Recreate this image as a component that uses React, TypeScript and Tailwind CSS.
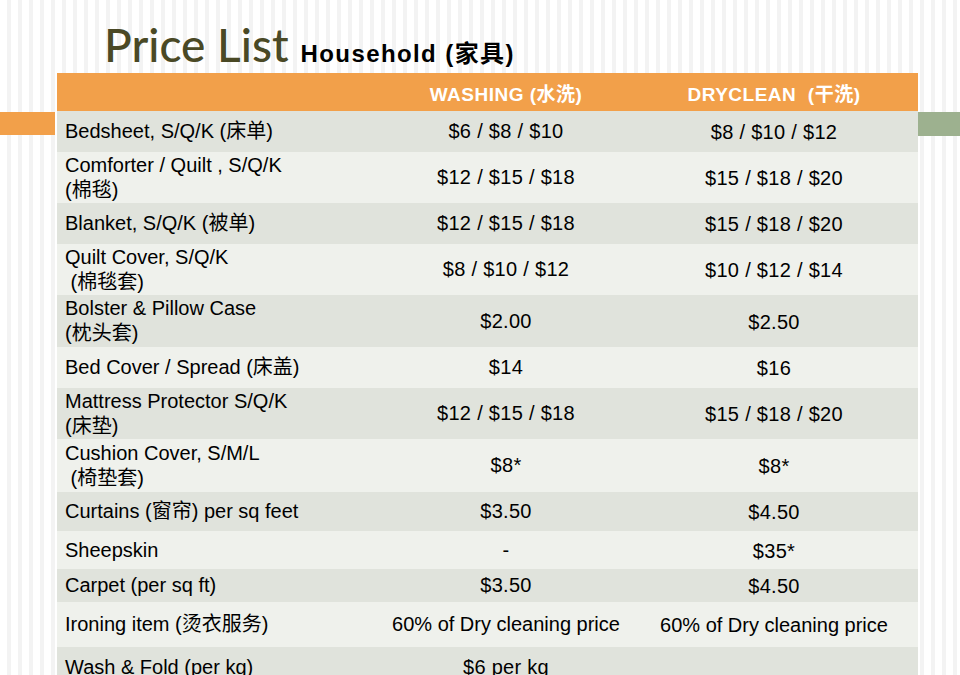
const rows: { item: string[]; wash: string; dry: string; h: string; dark: boolean }[] = [
  { item: ["Bedsheet, S/Q/K (床单)"], wash: "$6 / $8 / $10", dry: "$8 / $10 / $12", h: "h-[41px]", dark: true },
  { item: ["Comforter / Quilt , S/Q/K", "(棉毯)"], wash: "$12 / $15 / $18", dry: "$15 / $18 / $20", h: "h-[51px]", dark: false },
  { item: ["Blanket, S/Q/K (被单)"], wash: "$12 / $15 / $18", dry: "$15 / $18 / $20", h: "h-[41px]", dark: true },
  { item: ["Quilt Cover, S/Q/K", "\u00a0(棉毯套)"], wash: "$8 / $10 / $12", dry: "$10 / $12 / $14", h: "h-[51px]", dark: false },
  { item: ["Bolster & Pillow Case", "(枕头套)"], wash: "$2.00", dry: "$2.50", h: "h-[52px]", dark: true },
  { item: ["Bed Cover / Spread (床盖)"], wash: "$14", dry: "$16", h: "h-[41px]", dark: false },
  { item: ["Mattress Protector S/Q/K", "(床垫)"], wash: "$12 / $15 / $18", dry: "$15 / $18 / $20", h: "h-[51px]", dark: true },
  { item: ["Cushion Cover, S/M/L", "\u00a0(椅垫套)"], wash: "$8*", dry: "$8*", h: "h-[53px]", dark: false },
  { item: ["Curtains (窗帘) per sq feet"], wash: "$3.50", dry: "$4.50", h: "h-[39px]", dark: true },
  { item: ["Sheepskin"], wash: "-", dry: "$35*", h: "h-[38px]", dark: false },
  { item: ["Carpet (per sq ft)"], wash: "$3.50", dry: "$4.50", h: "h-[33px]", dark: true },
  { item: ["Ironing item (烫衣服务)"], wash: "60% of Dry cleaning price", dry: "60% of Dry cleaning price", h: "h-[45px]", dark: false },
  { item: ["Wash & Fold (per kg)"], wash: "$6 per kg", dry: "", h: "h-[40px]", dark: true },
];

export default function App() {
  return (
    <div className="h-[675px] w-[960px] overflow-hidden bg-[repeating-linear-gradient(90deg,#ffffff_0px,#ffffff_7px,#f3f3f3_7px,#f3f3f3_11px)] font-['Liberation_Sans','Noto_Sans_CJK_SC',sans-serif] text-black">
      {/* Title */}
      <div className="flex h-[73px] items-baseline pl-[104px] pt-[22px]">
        <span className="font-['Lato',sans-serif] text-[46px] font-medium leading-none text-[#4a4925]">Price List</span>
        <span className="ml-[12px] text-[24px] font-bold leading-none tracking-[1.4px]">Household (家具)</span>
      </div>

      <div className="flex">
        {/* left accent */}
        <div className="w-[57px] pt-[39px]">
          <div className="h-[23px] w-[55px] bg-[#f2a04a]" />
        </div>

        {/* Table */}
        <div className="w-[861px]">
          <div className="grid h-[38px] grid-cols-[325px_248px_288px] items-end bg-[#f2a04a] pb-[2px] text-[19px] font-bold tracking-[0.5px] text-white">
            <div />
            <div className="text-center">WASHING (水洗)</div>
            <div className="text-center">DRYCLEAN&nbsp;&nbsp;(干洗)</div>
          </div>
          {rows.map((r, i) => {
            const track = r.wash.length > 16 ? "tracking-normal" : "tracking-[0.3px]";
            return (
              <div
                key={i}
                className={`grid grid-cols-[325px_248px_288px] items-center text-[20px] leading-[25px] ${r.h} ${r.dark ? "bg-[#e0e3dc]" : "bg-[#eff1ec]"}`}
              >
                <div className="pl-[8px]">
                  {r.item.map((line, j) => (
                    <div key={j}>{line}</div>
                  ))}
                </div>
                <div className={`text-center ${track}`}>{r.wash}</div>
                <div className={`pt-[2px] text-center ${track}`}>{r.dry}</div>
              </div>
            );
          })}
        </div>

        {/* right accent */}
        <div className="flex-1 pt-[39px]">
          <div className="h-[24px] bg-[#9db18f]" />
        </div>
      </div>
    </div>
  );
}
